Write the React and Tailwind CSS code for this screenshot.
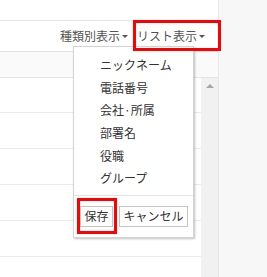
const items = ['ニックネーム', '電話番号', '会社·所属', '部署名', '役職', 'グループ'];

const Caret = () => (
  <span className="ml-[2px] inline-block w-0 h-0 border-l-[3px] border-r-[3px] border-t-[3px] border-l-transparent border-r-transparent border-t-[#555]" />
);

const App = () => {
  return (
    <div
      className="relative w-[267px] h-[277px] overflow-hidden flex bg-white text-[12px]"
      style={{ fontFamily: '"Noto Sans CJK JP", "Noto Sans", sans-serif' }}
    >
      {/* 左側の一覧 */}
      <div className="w-[219px] flex flex-col border-r border-[#e8e8e8]">
        <div className="h-[21px] shrink-0 border-b border-[#e3e3e3]" />

        {/* ツールバー */}
        <div className="h-[30px] shrink-0 flex items-center justify-end pr-[13px] text-[#555] leading-none">
          <div className="flex items-center">
            <span>種類別表示</span>
            <Caret />
          </div>
          <div className="flex items-center ml-[9px]">
            <span>リスト表示</span>
            <Caret />
          </div>
        </div>

        {/* ヘッダー */}
        <div className="h-[27px] shrink-0 border-y border-[#e3e3e3] bg-[#fafafa]" />

        {/* 本体 */}
        <div className="flex-1 flex">
          <div className="flex-1 flex flex-col">
            <div className="h-[35px] shrink-0 border-b border-[#ebebeb]" />
            {[0, 1, 2, 3].map((i) => (
              <div key={i} className="h-[36px] shrink-0 border-b border-[#ebebeb]" />
            ))}
          </div>
          <div className="w-[17px] bg-[#f1f1f1] flex justify-center pt-[6px]">
            <span className="inline-block w-0 h-0 border-l-[4px] border-r-[4px] border-b-[4px] border-l-transparent border-r-transparent border-b-[#a6a6a6]" />
          </div>
        </div>
      </div>

      <div className="flex-1 bg-[#f7f7f7]" />

      {/* 表示項目メニュー */}
      <div className="absolute left-[73px] top-[46px] w-[121px] h-[192px] bg-white border border-[#d4d4d4] shadow-[1px_1px_2px_rgba(0,0,0,0.25)] flex flex-col">
        <ul className="pt-[7px] text-[#333]">
          {items.map((item) => (
            <li key={item} className="h-[22.6px] flex items-center pl-[26px] leading-none">
              {item}
            </li>
          ))}
        </ul>
        <div className="mt-[5px] border-t border-[#e3e3e3]" />
        <div className="flex gap-[6px] pl-[6px] pt-[10px]">
          <button className="w-[33px] h-[21px] border border-[#c4c4c4] bg-white text-[#333] leading-none flex items-center justify-center">
            保存
          </button>
          <button className="w-[69px] h-[21px] border border-[#c4c4c4] bg-white text-[#333] leading-none flex items-center justify-center">
            キャンセル
          </button>
        </div>
      </div>

      {/* 赤枠の注釈 */}
      <div className="absolute left-[133px] top-[20px] w-[88px] h-[31px] border-[3px] border-[#ff0000]" />
      <div className="absolute left-[77px] top-[198px] w-[40px] h-[36px] border-[3px] border-[#ff0000]" />
    </div>
  );
};

export default App;
